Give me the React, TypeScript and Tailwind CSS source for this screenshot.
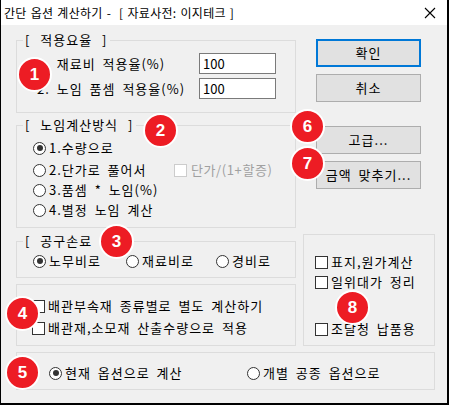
import React from "react";

const F = "font-['Noto_Sans_CJK_KR','Noto_Sans',sans-serif]";

function Radio({ checked = false }: { checked?: boolean }) {
  return (
    <span className="w-[13px] h-[13px] rounded-full border border-[#333333] bg-white flex items-center justify-center shrink-0">
      {checked && <span className="w-[6px] h-[6px] rounded-full bg-[#333333]" />}
    </span>
  );
}

function Check({ disabled = false }: { disabled?: boolean }) {
  return (
    <span
      className={
        disabled
          ? "w-[13px] h-[13px] border border-[#cccccc] bg-white shrink-0"
          : "w-[13px] h-[13px] border border-[#333333] bg-white shrink-0"
      }
    />
  );
}

function Badge({ n, pos }: { n: string; pos: string }) {
  return (
    <div
      className={
        "absolute w-[35px] h-[35px] rounded-full bg-[#ed1c24] border-[2px] border-white flex items-center justify-center text-white text-[17px] font-bold font-['Liberation_Sans',Arial,sans-serif] leading-none tracking-normal " +
        pos
      }
    >
      {n}
    </div>
  );
}

function Legend({ children }: { children: React.ReactNode }) {
  return (
    <div className="absolute top-[-9px] left-[6px] pl-[2px] pr-[3px] bg-[#f0f0f0] text-[13px] leading-[16px] text-black whitespace-pre [word-spacing:6px]">
      {children}
    </div>
  );
}

function Btn({ children, primary = false }: { children: React.ReactNode; primary?: boolean }) {
  return (
    <div
      className={
        primary
          ? "ml-[13px] w-[105px] h-[28px] bg-[#e1e1e1] border-[2px] border-[#0078d7] flex items-center justify-center text-[13px] text-black whitespace-pre"
          : "ml-[13px] w-[105px] h-[28px] bg-[#e1e1e1] border border-[#adadad] flex items-center justify-center text-[13px] text-black whitespace-pre"
      }
    >
      {children}
    </div>
  );
}

export default function App() {
  return (
    <div className={"relative w-[449px] h-[405px] bg-[#f0f0f0] border-l border-r-2 border-b-2 border-black overflow-hidden tracking-[1px] [word-spacing:3px] " + F}>
      {/* title bar */}
      <div className="h-[25px] bg-white flex items-center pl-[3px] pr-[8px] justify-between">
        <span className="text-[12px] leading-none text-black whitespace-pre tracking-[0.3px] [word-spacing:1px]">간단 옵션 계산하기 -  [ 자료사전: 이지테크 ]</span>
        <svg width="12" height="12" viewBox="0 0 12 12" className="mr-[3px]">
          <path d="M1 1 L11 11 M11 1 L1 11" stroke="#000" strokeWidth="1.1" />
        </svg>
      </div>

      <div className="pt-[15px] pl-[15px]">
        <div className="flex items-start">
          {/* left column */}
          <div className="w-[280px] flex flex-col">
            {/* group 1 */}
            <div className="relative h-[73px] border border-[#dcdcdc] pl-[20px] pr-[19px] pt-[12px] flex flex-col gap-[4px]">
              <Legend>{"[ 적용요율 ]"}</Legend>
              <div className="flex items-center justify-between h-[21px]">
                <span className="text-[13px] whitespace-pre">1. 재료비 적용율(%)</span>
                <div className="w-[77px] h-[21px] bg-white border border-[#7a7a7a] text-[13px] leading-[19px] pl-[3px] tracking-normal">100</div>
              </div>
              <div className="flex items-center justify-between h-[21px]">
                <span className="text-[13px] whitespace-pre">2. 노임 품셈 적용율(%)</span>
                <div className="w-[77px] h-[21px] bg-white border border-[#7a7a7a] text-[13px] leading-[19px] pl-[3px] tracking-normal">100</div>
              </div>
            </div>

            {/* group 2 */}
            <div className="relative mt-[12px] h-[103px] border border-[#dcdcdc] pl-[16px] pt-[12px] flex flex-col text-[13px]">
              <Legend>{"[ 노임계산방식 ]"}</Legend>
              <div className="flex items-center h-[20px] mb-[2px] gap-[3px]">
                <Radio checked />
                <span>1.수량으로</span>
              </div>
              <div className="flex items-center h-[20px] gap-[3px]">
                <Radio />
                <span className="w-[122px] whitespace-pre">2.단가로 풀어서</span>
                <Check disabled />
                <span className="text-[#a0a0a0] ml-[1px] tracking-[0.6px]">단가/(1+할증)</span>
              </div>
              <div className="flex items-center h-[20px] gap-[3px]">
                <Radio />
                <span className="whitespace-pre">3.품셈 * 노임(%)</span>
              </div>
              <div className="flex items-center h-[20px] gap-[3px]">
                <Radio />
                <span className="whitespace-pre">4.별정 노임 계산</span>
              </div>
            </div>

            {/* group 3 */}
            <div className="relative mt-[13px] h-[37px] border border-[#dcdcdc] pl-[16px] pt-[9px] flex items-start text-[13px]">
              <Legend>{"[ 공구손료 ]"}</Legend>
              <div className="flex items-center h-[20px] gap-[3px] w-[93px]">
                <Radio checked />
                <span>노무비로</span>
              </div>
              <div className="flex items-center h-[20px] gap-[3px] w-[90px]">
                <Radio />
                <span>재료비로</span>
              </div>
              <div className="flex items-center h-[20px] gap-[3px]">
                <Radio />
                <span>경비로</span>
              </div>
            </div>

            {/* group 4 */}
            <div className="mt-[6px] h-[62px] border border-[#dcdcdc] pl-[15px] pt-[11px] flex flex-col gap-[2px] text-[13px]">
              <div className="flex items-center h-[20px] gap-[3px]">
                <Check />
                <span className="whitespace-pre">배관부속재 종류별로 별도 계산하기</span>
              </div>
              <div className="flex items-center h-[20px] gap-[3px]">
                <Check />
                <span className="whitespace-pre">배관재,소모재 산출수량으로 적용</span>
              </div>
            </div>
          </div>

          {/* right column */}
          <div className="ml-[7px] w-[132px] -mt-[1px] flex flex-col">
            <Btn primary>확인</Btn>
            <div className="mt-[7px]"><Btn>취소</Btn></div>
            <div className="mt-[24px]"><Btn>고급...</Btn></div>
            <div className="mt-[7px]"><Btn>금액 맞추기...</Btn></div>
            <div className="mt-[45px] h-[112px] border border-[#dcdcdc] pl-[11px] pt-[17px] flex flex-col text-[13px]">
              <div className="flex items-center h-[20px] gap-[3px]">
                <Check />
                <span>표지,원가계산</span>
              </div>
              <div className="flex items-center h-[20px] gap-[3px]">
                <Check />
                <span className="whitespace-pre">일위대가 정리</span>
              </div>
              <div className="flex items-center h-[20px] gap-[3px] mt-[27px]">
                <Check />
                <span className="whitespace-pre">조달청 납품용</span>
              </div>
            </div>
          </div>
        </div>

        {/* group 5 */}
        <div className="mt-[6px] w-[419px] h-[38px] border border-[#dcdcdc] pl-[32px] pt-[10px] flex items-start text-[13px]">
          <div className="flex items-center h-[20px] gap-[3px] w-[198px]">
            <Radio checked />
            <span className="whitespace-pre">현재 옵션으로 계산</span>
          </div>
          <div className="flex items-center h-[20px] gap-[3px]">
            <Radio />
            <span className="whitespace-pre">개별 공종 옵션으로</span>
          </div>
        </div>
      </div>

      <Badge n="1" pos="left-[16px] top-[57px]" />
      <Badge n="2" pos="left-[142px] top-[113px]" />
      <Badge n="3" pos="left-[98px] top-[224px]" />
      <Badge n="4" pos="left-[4px] top-[296px]" />
      <Badge n="5" pos="left-[4px] top-[355px]" />
      <Badge n="6" pos="left-[289px] top-[109px]" />
      <Badge n="7" pos="left-[289px] top-[146px]" />
      <Badge n="8" pos="left-[334px] top-[290px]" />
    </div>
  );
}
